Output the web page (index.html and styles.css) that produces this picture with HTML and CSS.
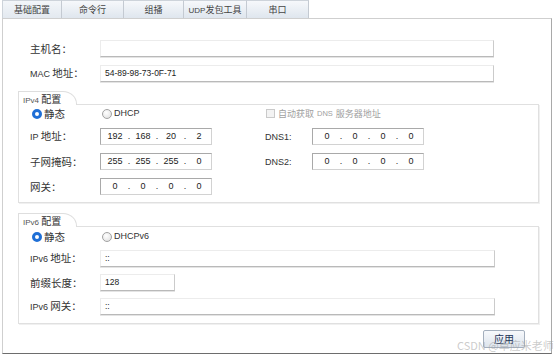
FILE: index.html
```html
<!DOCTYPE html>
<html lang="zh-CN">
<head>
    <meta charset="UTF-8">
    <meta name="viewport" content="width=device-width, initial-scale=1.0">
    <title>基础配置</title>
    <link rel="stylesheet" href="styles.css">
</head>
<body>
    <div class="window">
        <div class="tabs">
            <div class="tab tab-1 active">基础配置</div>
            <div class="tab tab-2">命令行</div>
            <div class="tab tab-3">组播</div>
            <div class="tab tab-4"><span class="en">UDP</span>发包工具</div>
            <div class="tab tab-5">串口</div>
        </div>

        <div class="panel">
            <div class="form-rows">
                <div class="row">
                    <span class="label">主机名：</span>
                    <div class="text-field wide"></div>
                </div>
                <div class="row">
                    <span class="label"><span class="en">MAC</span> 地址：</span>
                    <div class="text-field wide">54-89-98-73-0F-71</div>
                </div>
            </div>

            <div class="group ipv4-group">
                <div class="group-title"><span class="en">IPv4</span> 配置</div>
                <div class="group-body ipv4">
                    <label class="option first"><span class="radio checked"></span>静态</label>
                    <label class="option"><span class="radio"></span><span class="en">DHCP</span></label>
                    <span></span>
                    <label class="option disabled span-2"><span class="checkbox"></span>自动获取 <span class="en">DNS</span> 服务器地址</label>

                    <span class="label"><span class="en">IP</span> 地址：</span>
                    <div class="ip-field">
                        <span class="seg">192</span><span class="dot">.</span><span class="seg">168</span><span class="dot">.</span><span class="seg">20</span><span class="dot">.</span><span class="seg">2</span>
                    </div>
                    <span></span>
                    <span class="label en">DNS1:</span>
                    <div class="ip-field">
                        <span class="seg">0</span><span class="dot">.</span><span class="seg">0</span><span class="dot">.</span><span class="seg">0</span><span class="dot">.</span><span class="seg">0</span>
                    </div>

                    <span class="label">子网掩码：</span>
                    <div class="ip-field">
                        <span class="seg">255</span><span class="dot">.</span><span class="seg">255</span><span class="dot">.</span><span class="seg">255</span><span class="dot">.</span><span class="seg">0</span>
                    </div>
                    <span></span>
                    <span class="label en">DNS2:</span>
                    <div class="ip-field">
                        <span class="seg">0</span><span class="dot">.</span><span class="seg">0</span><span class="dot">.</span><span class="seg">0</span><span class="dot">.</span><span class="seg">0</span>
                    </div>

                    <span class="label">网关：</span>
                    <div class="ip-field">
                        <span class="seg">0</span><span class="dot">.</span><span class="seg">0</span><span class="dot">.</span><span class="seg">0</span><span class="dot">.</span><span class="seg">0</span>
                    </div>
                </div>
            </div>

            <div class="group ipv6-group">
                <div class="group-title"><span class="en">IPv6</span> 配置</div>
                <div class="group-body ipv6">
                    <label class="option first"><span class="radio checked"></span>静态</label>
                    <label class="option"><span class="radio"></span><span class="en">DHCPv6</span></label>

                    <span class="label"><span class="en">IPv6</span> 地址：</span>
                    <div class="text-field">::</div>

                    <span class="label">前缀长度：</span>
                    <div class="text-field short">128</div>

                    <span class="label"><span class="en">IPv6</span> 网关：</span>
                    <div class="text-field">::</div>
                </div>
            </div>

            <div class="actions">
                <button class="apply">应用</button>
            </div>
        </div>

        <div class="watermark">CSDN @卓应米老师</div>
    </div>
</body>
</html>
```

FILE: styles.css
```css
body {
    margin: 0;
    padding: 0;
    background-color: #fff;
    font-family: "Noto Sans CJK SC", sans-serif;
    color: #333;
}

.window {
    position: relative;
    width: 550px;
    height: 356px;
    margin-left: 2px;
}

.en {
    font-family: "Liberation Sans", "Noto Sans CJK SC", sans-serif;
    font-size: 9px;
}

/* tabs */
.tabs {
    display: flex;
    height: 18px;
}

.tab {
    box-sizing: border-box;
    height: 18px;
    line-height: 17px;
    text-align: center;
    font-size: 9px;
    color: #444;
    background: linear-gradient(#f6f8fb, #dfe6ee);
    border-top: 1px solid #cdd3da;
    border-right: 1px solid #c4cad2;
}

.tab.active {
    background: linear-gradient(#f3f6f9, #e3e9f0);
    border-left: 1px solid #cdd3da;
}

.tab-1 { width: 60px; }
.tab-2 { width: 62px; }
.tab-3 { width: 60px; }
.tab-4 { width: 63px; }
.tab-5 { width: 62px; }

.tab .en {
    font-size: 8px;
}

/* panel */
.panel {
    box-sizing: border-box;
    height: 336px;
    border: 1px solid #cfcfcf;
    border-right-color: #a9a9a9;
    border-bottom-color: #6d6d6d;
    display: flex;
    flex-direction: column;
}

.form-rows {
    display: flex;
    flex-direction: column;
    gap: 8px;
    margin: 21px 0 0 27px;
}

.row {
    display: flex;
    align-items: center;
    height: 17px;
}

.label {
    width: 70px;
    font-size: 10.5px;
    line-height: 14px;
    color: #333;
    white-space: nowrap;
}

.label.en {
    font-size: 9px;
}

.text-field {
    box-sizing: border-box;
    width: 395px;
    height: 17px;
    padding-left: 4px;
    font-family: "Liberation Sans", sans-serif;
    font-size: 8.5px;
    line-height: 15px;
    color: #222;
    background-color: #fff;
    border: 1px solid #ececec;
    border-bottom-color: #b9b9b9;
    border-right-color: #cbcbcb;
    box-shadow: 0 1px 0 #e4e4e4;
}

.text-field.wide {
    width: 394px;
}

.text-field.short {
    width: 75px;
}

/* groups */
.group {
    margin-left: 15px;
    width: 521px;
}

.ipv4-group {
    margin-top: 9px;
}

.ipv6-group {
    margin-top: 10px;
}

.group-title {
    position: relative;
    z-index: 1;
    box-sizing: border-box;
    width: 59px;
    height: 14px;
    margin-bottom: -1px;
    padding-left: 4px;
    font-size: 10px;
    line-height: 13px;
    color: #333;
    background-color: #fff;
    border: 1px solid #dedede;
    border-bottom: none;
    border-top-right-radius: 14px 13px;
}

.group-title .en {
    font-size: 8px;
    color: #555;
}

.group-body {
    display: grid;
    align-items: center;
    border: 1px solid #e0e0e0;
    box-shadow: 1px 1px 0 #f0f0f0;
}

.ipv4 {
    grid-template-columns: 70px 112px 53px 47px 112px;
    grid-template-rows: 13px 17px 17px 17px;
    row-gap: 8px;
    padding: 2px 0 7px 11px;
}

.ipv6 {
    grid-template-columns: 70px 395px;
    grid-template-rows: 13px 17px 17px 17px;
    row-gap: 7px;
    padding: 3px 0 8px 11px;
}

.option {
    display: flex;
    align-items: center;
    gap: 2px;
    font-size: 10.5px;
    line-height: 13px;
    color: #333;
    margin-left: 2px;
    white-space: nowrap;
}

.option.disabled {
    color: #a0a0a0;
    margin-left: 1px;
    font-size: 9px;
}

.option.disabled .en {
    font-size: 7.5px;
    margin: 0 1px;
}

.span-2 {
    grid-column: span 2;
}

.radio {
    box-sizing: border-box;
    width: 10px;
    height: 10px;
    border-radius: 50%;
    border: 1px solid #a2a2a2;
    background: radial-gradient(circle at 40% 35%, #ffffff, #dcdcdc);
}

.radio.checked {
    border: 3px solid #1f6fd6;
    background: #fff;
}

.checkbox {
    box-sizing: border-box;
    width: 9px;
    height: 9px;
    margin-right: 1px;
    border: 1px solid #cacaca;
    background-color: #f3f3f3;
}

.ip-field {
    box-sizing: border-box;
    display: flex;
    width: 112px;
    height: 17px;
    padding-left: 2px;
    font-family: "Liberation Sans", sans-serif;
    font-size: 9px;
    line-height: 15px;
    color: #222;
    background-color: #fff;
    border: 1px solid #a9a9a9;
    border-right-color: #d2d2d2;
    border-bottom-color: #d2d2d2;
}

.ip-field .seg {
    width: 24px;
    text-align: center;
}

.ip-field .dot {
    width: 4px;
    text-align: center;
}

/* actions */
.actions {
    display: flex;
    justify-content: flex-end;
    margin: 6px 26px 0 0;
}

.apply {
    box-sizing: border-box;
    width: 42px;
    height: 18px;
    padding: 0;
    font-family: "Noto Sans CJK SC", sans-serif;
    font-size: 10px;
    line-height: 16px;
    color: #1d3557;
    background: linear-gradient(#f7f9fc, #dde4ec);
    border: 1px solid #a4afbd;
    border-radius: 2px;
}

.watermark {
    position: absolute;
    left: 455px;
    top: 338px;
    font-family: "Noto Sans CJK SC", sans-serif;
    font-size: 11px;
    line-height: 14px;
    color: rgba(160, 160, 160, 0.55);
    white-space: nowrap;
}
```
